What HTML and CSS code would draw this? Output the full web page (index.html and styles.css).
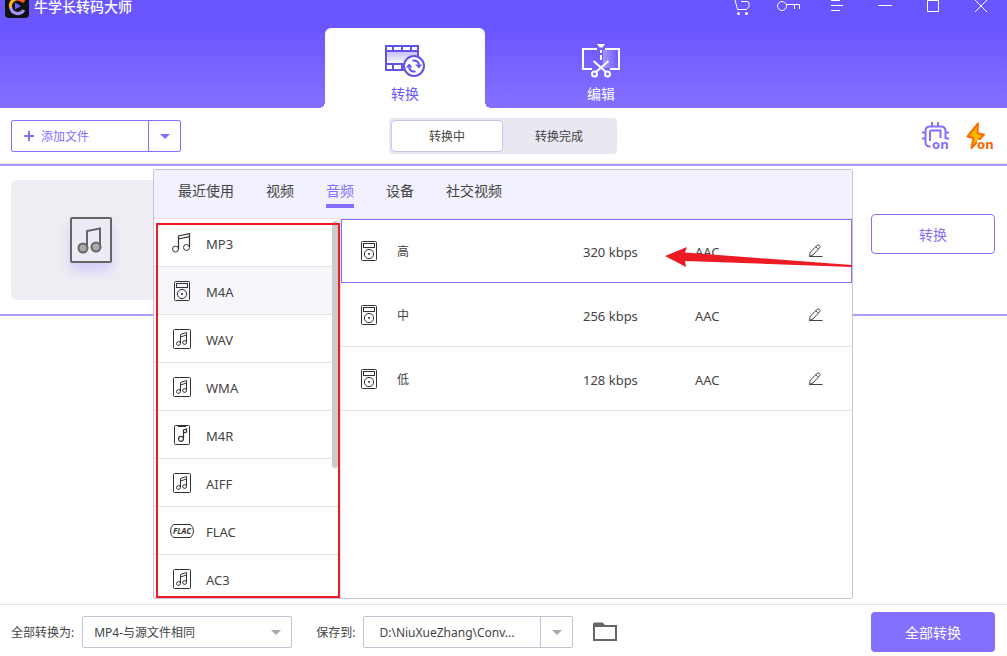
FILE: index.html
```html
<!DOCTYPE html>
<html lang="zh-CN">
<head>
<meta charset="utf-8">
<meta name="viewport" content="width=device-width, initial-scale=1">
<title>牛学长转码大师</title>
<link rel="stylesheet" href="styles.css">
</head>
<body>
<svg class="sprite" aria-hidden="true">
  <symbol id="i-player" viewBox="0 0 16 20"><g fill="none" stroke="#333"><rect x=".5" y=".5" width="15" height="19" rx="1"/><rect x="2.5" y="2.5" width="11" height="4"/><circle cx="8" cy="13" r="4.6"/></g><circle cx="8" cy="13" r="1" fill="#333"/></symbol>
  <symbol id="i-notebox" viewBox="0 0 18 20"><g fill="none" stroke="#333"><rect x=".5" y=".5" width="17" height="19" rx="1"/><path d="M7.500 14.500v-9L13.500 3.500v9.500M7.500 8l6-2" /><circle cx="5.500" cy="14.500" r="1.900"/><circle cx="11.600" cy="13.500" r="1.900"/></g></symbol>
  <symbol id="i-ring" viewBox="0 0 16 20"><g fill="none" stroke="#333"><rect x=".5" y=".5" width="15" height="19" rx="1"/><path d="M4 1.200h8" stroke-width="1.600"/><path d="M9.500 13.500V5l3-1v3l-3 1" stroke-width="1.200"/><circle cx="7" cy="13.800" r="2.500" stroke-width="1.200"/></g></symbol>
  <symbol id="i-pen" viewBox="0 0 14 14"><path d="M.5 12.500h13M.5 12.500l.7-4L8 1.300q1.300-1 2.500.1t.1 2.400L4 11l-3.500 1.500M6.800 2.700l2.600 2.400" fill="none" stroke="#444"/></symbol>
</svg>

<header class="header">
  <div class="titlebar">
    <svg class="logo" width="24" height="18" viewBox="0 6 24 18"><rect width="24" height="24" rx="4" fill="#111"/><g fill="none" stroke-width="3.200"><path d="M17.500 7A7 7 0 0 0 5.800 14" stroke="#ffb11b"/><path d="M12 5.200A7 7 0 0 1 19 8" stroke="#ff5a1f"/><path d="M5.800 13.500A7 7 0 0 0 18.800 16" stroke="#a594ff"/></g><path d="M10 8.500l6 3.500-6 3.500z" fill="#6f63ff"/></svg>
    <h1 class="app-name">牛学长转码大师</h1>
    <div class="window-tools">
      <button aria-label="购物车"><svg width="24" height="18" viewBox="0 0 24 18"><path d="M6 0l2.500 9.500h9L20 6.500V3.500q0-2-2-2h-6" fill="none" stroke="#fff"/><circle cx="9.500" cy="13.500" r="1.500" fill="#fff"/><circle cx="17.500" cy="13.500" r="1.500" fill="#fff"/></svg></button>
      <button aria-label="注册"><svg width="24" height="18" viewBox="0 0 24 18"><g fill="none" stroke="#fff"><circle cx="5" cy="6" r="4.500"/><path d="M9.500 4.500h13V9M17.500 4.500V9"/></g></svg></button>
      <button aria-label="菜单"><svg width="24" height="18" viewBox="0 0 24 18"><path d="M6 .5h9M6 5.500h12M6 10.500h9" stroke="#fff"/></svg></button>
      <button aria-label="最小化"><svg width="24" height="18" viewBox="0 0 24 18"><path d="M5 5.500h14" stroke="#fff"/></svg></button>
      <button aria-label="最大化"><svg width="24" height="18" viewBox="0 0 24 18"><path d="M6.500 0.500h11v11h-11z" fill="none" stroke="#fff"/></svg></button>
      <button aria-label="关闭"><svg width="24" height="18" viewBox="0 0 24 18"><path d="M6 0l12 12M18 0L6 12" stroke="#fff"/></svg></button>
    </div>
  </div>
  <nav class="modes">
    <button class="mode mode-active" aria-current="page">
      <svg width="40" height="34" viewBox="0 0 40 34"><defs><linearGradient id="film" x1="0" y1="0" x2="0" y2="1"><stop offset="0" stop-color="#6a56ff" stop-opacity=".4"/><stop offset="1" stop-color="#6a56ff" stop-opacity="0"/></linearGradient></defs><path d="M1 7h32v14H1z" fill="url(#film)"/><path d="M1 2h32v24H1zM1 7h32M1 20h32M8 2v5M17 2v5M26 2v5M8 20v6M17 20v6" fill="none" stroke="#6253e8" stroke-width="2"/><circle cx="29" cy="22" r="10" fill="#fff" stroke="#6253e8" stroke-width="2"/><path d="M24 23.500a5 5 0 0 0 6.500 3.800M34 20.500a5 5 0 0 0-6.500-3.800" fill="none" stroke="#6253e8" stroke-width="2"/><path d="M20.800 23.500l3.400-4 3.400 4zM30.400 20.500h6.800l-3.400 4z" fill="#6253e8"/></svg>
      <span>转换</span>
    </button>
    <button class="mode">
      <svg width="40" height="34" viewBox="0 0 40 34"><defs><linearGradient id="pane"><stop offset="0" stop-color="#fff" stop-opacity=".35"/><stop offset="1" stop-color="#fff" stop-opacity="0"/></linearGradient></defs><path d="M22 6h14v18H22z" fill="url(#pane)"/><g fill="none" stroke="#fff" stroke-width="2"><path d="M16 5H2v20h9M24 5h14v20h-9M20 6v3M20 11v5M12.500 17L25 28M27.500 17L15 28"/><circle cx="13.500" cy="30" r="2.500"/><circle cx="26.500" cy="30" r="2.500"/></g><path d="M16 0h8l-2.500 3.500h-3z" fill="#fff"/></svg>
      <span>编辑</span>
    </button>
  </nav>
</header>

<section class="toolbar">
  <div class="add-file">
    <button class="add-main"><svg width="10" height="10" viewBox="0 0 10 10"><path d="M5 0v10M0 5h10" stroke="#8470ff" stroke-width="2"/></svg><span class="label">添加文件</span></button>
    <button class="add-more" aria-label="更多添加方式"><i class="caret"></i></button>
  </div>
  <div class="segments">
    <button class="segment segment-active">转换中</button>
    <button class="segment">转换完成</button>
  </div>
  <div class="toggles">
    <button aria-label="硬件加速"><svg width="28" height="28" viewBox="0 0 28 28"><path d="M9.500 24.500H9q-4.500 0-4.500-4.500V9Q4.500 4.500 9 4.500h11q4.500 0 4.500 4.500v8M11 4V0M17 4V0M4 10.500H1M4 16.500H1M25 10.500h3M25 16.500h3" fill="none" stroke="#8470ff" stroke-width="2"/><path d="M9 19V10q0-1.500 1.500-1.500h9V16" fill="none" stroke="#8470ff" stroke-width="2"/><path d="M11 18h17v9H11z" fill="#fff"/><text x="11" y="27" class="on on-chip">on</text></svg></button>
    <button aria-label="高速转换"><svg width="30" height="28" viewBox="0 0 30 28"><path d="M13 1.500L2.500 14.500l6 1.500-2 10 12.500-13.500-6.500-1z" fill="#ffb800" stroke="#ff6a00" stroke-width="2" stroke-linejoin="round"/><path d="M12 18h17v9H12z" fill="#fff"/><text x="12" y="27" class="on on-bolt">on</text></svg></button>
  </div>
</section>

<main class="workspace">
  <article class="task">
    <div class="thumb"><svg width="42" height="46" viewBox="0 0 42 46"><rect x="1" y="1" width="40" height="44" rx="1" fill="#eeebf7" stroke="#666" stroke-width="2"/><g stroke="#666" stroke-width="2"><path d="M17 31V14l13-2.500V30" fill="none"/><circle cx="13" cy="31" r="4.500" fill="#aaa"/><circle cx="26" cy="30" r="4.500" fill="#aaa"/></g></svg></div>
    <button class="convert">转换</button>
  </article>

  <section class="picker">
    <nav class="picker-tabs">
      <button>最近使用</button><button>视频</button><button class="picker-tab-active">音频</button><button>设备</button><button>社交视频</button>
    </nav>
    <div class="picker-body">
      <div class="formats">
        <button class="format"><svg width="20" height="20" viewBox="0 0 20 20"><g fill="none" stroke="#333"><path d="M6.500 16V3L17.500.7V14M6.500 6l11-2.300" stroke-width="1.200"/><circle cx="3.500" cy="16" r="3"/><circle cx="14.500" cy="14.500" r="3"/></g></svg><span class="label">MP3</span></button>
        <button class="format format-active"><svg width="20" height="20"><use href="#i-player"/></svg><span class="label">M4A</span></button>
        <button class="format"><svg width="20" height="20"><use href="#i-notebox"/></svg><span class="label">WAV</span></button>
        <button class="format"><svg width="20" height="20"><use href="#i-notebox"/></svg><span class="label">WMA</span></button>
        <button class="format"><svg width="20" height="20"><use href="#i-ring"/></svg><span class="label">M4R</span></button>
        <button class="format"><svg width="20" height="20"><use href="#i-notebox"/></svg><span class="label">AIFF</span></button>
        <button class="format format-wide"><svg width="24" height="14" viewBox="0 0 24 14"><path d="M3.500.5h17q3 2.500 3 6.500t-3 6.500h-17q-3-2.500-3-6.500t3-6.500z" fill="none" stroke="#333"/><text x="12" y="10" class="flac">FLAC</text></svg><span class="label">FLAC</span></button>
        <button class="format"><svg width="20" height="20"><use href="#i-notebox"/></svg><span class="label">AC3</span></button>
        <i class="scroll-thumb"></i>
      </div>
      <div class="presets-pane">
        <table class="presets">
          <colgroup><col class="c-icon"><col><col class="c-rate"><col class="c-codec"><col class="c-edit"></colgroup>
          <tbody>
          <tr class="preset-active"><td><svg width="16" height="20"><use href="#i-player"/></svg></td><td class="quality"><span class="label">高</span></td><td><span class="label">320 kbps</span></td><td><span class="label">AAC</span></td><td><button aria-label="编辑"><svg width="14" height="14"><use href="#i-pen"/></svg></button></td></tr>
          <tr><td><svg width="16" height="20"><use href="#i-player"/></svg></td><td class="quality"><span class="label">中</span></td><td><span class="label">256 kbps</span></td><td><span class="label">AAC</span></td><td><button aria-label="编辑"><svg width="14" height="14"><use href="#i-pen"/></svg></button></td></tr>
          <tr><td><svg width="16" height="20"><use href="#i-player"/></svg></td><td class="quality"><span class="label">低</span></td><td><span class="label">128 kbps</span></td><td><span class="label">AAC</span></td><td><button aria-label="编辑"><svg width="14" height="14"><use href="#i-pen"/></svg></button></td></tr>
          </tbody>
        </table>
      </div>
    </div>
    <div class="mark-frame"></div>
    <svg class="mark-arrow" width="187" height="22" viewBox="0 0 187 22"><path d="M0 10L22 1l-2 5.500 167 12.500v2L20 15l1 6z" fill="#ed1c24"/></svg>
  </section>
</main>

<footer class="footer">
  <label for="target" class="label">全部转换为:</label>
  <div class="select-wrap"><select id="target"><option>MP4-与源文件相同</option></select><i class="caret"></i></div>
  <label for="path" class="label path-label">保存到:</label>
  <div class="path"><input id="path" value="D:\NiuXueZhang\Conv..." readonly><button aria-label="选择目录"><i class="caret"></i></button></div>
  <button class="folder" aria-label="打开文件夹"><svg width="24" height="20" viewBox="0 0 24 20"><path d="M1 4h22v14H1z" fill="none" stroke="#666" stroke-width="2"/><path d="M0 5V2q0-1.500 1.500-1.500h8L12 3v2z" fill="#666"/></svg></button>
  <button class="convert-all">全部转换</button>
</footer>
</body>
</html>
```
FILE: styles.css
```css
* { box-sizing: border-box; }

body {
  margin: 0;
  min-height: 100vh;
  display: flex;
  flex-direction: column;
  background: #fff;
  color: #444;
  font: 12px/20px "Noto Sans", "Noto Sans CJK SC", sans-serif;
}

button, input, select {
  font: inherit;
  color: inherit;
  background: none;
  border: 0;
  padding: 0;
  margin: 0;
}

button {
  display: flex;
  align-items: center;
  justify-content: center;
}

svg { display: block; flex: none; }
.sprite { position: absolute; width: 0; height: 0; }

.label {
  display: block;
  padding-top: 2px;
}

.caret {
  border: 5px solid transparent;
  border-top-color: currentColor;
  border-bottom: 0;
}

/* Header */
.header {
  background: linear-gradient(#6a56ff 25%, #8470ff);
  color: #fff;
}
.titlebar {
  height: 28px;
  display: flex;
  align-items: flex-start;
  padding: 0 2px 0 5px;
}
.app-name {
  margin: 0 auto 0 5px;
  font-size: 14px;
  line-height: 14px;
  font-weight: 500;
}
.window-tools { display: flex; }
.window-tools button { width: 48px; }

.modes {
  display: flex;
  justify-content: center;
  gap: 36px;
  padding-right: 1px;
}
.mode {
  width: 160px;
  height: 80px;
  flex-direction: column;
  justify-content: flex-start;
  gap: 6px;
  padding-top: 16px;
  font-size: 14px;
}
.mode-active {
  position: relative;
  background: #fff;
  color: #6a56ff;
  border-radius: 6px 6px 0 0;
}
.mode-active::before,
.mode-active::after {
  content: "";
  position: absolute;
  bottom: 0;
  width: 6px;
  height: 6px;
}
.mode-active::before {
  right: 100%;
  background: radial-gradient(circle at 0 0, transparent 6px, #fff 6px);
}
.mode-active::after {
  left: 100%;
  background: radial-gradient(circle at 100% 0, transparent 6px, #fff 6px);
}

/* Toolbar */
.toolbar {
  display: grid;
  grid-template-columns: 1fr auto 1fr;
  align-items: center;
  padding: 10px 12px 9px 11px;
  border-bottom: 1px solid #e4e4e4;
}
.add-file {
  display: flex;
  justify-self: start;
  width: 170px;
  height: 32px;
  border: 1px solid #8470ff;
  border-radius: 2px;
  color: #8470ff;
}
.add-main {
  flex: 1;
  justify-content: flex-start;
  gap: 7px;
  padding-left: 12px;
}
.add-more {
  width: 32px;
  border-left: 1px solid #8470ff;
}
.segments {
  display: flex;
  padding: 2px;
  border-radius: 4px;
  background: #e9e7f2;
}
.segment {
  width: 112px;
  height: 32px;
  padding-top: 1px;
  border-radius: 4px;
}
.segment-active {
  background: #fff;
  border: 1px solid #cbc4ef;
}
.toggles {
  display: flex;
  justify-self: end;
  gap: 16px;
}
.toggles svg { overflow: visible; }
.on { font: 700 13px "Noto Sans", sans-serif; }
.on-chip { fill: #8470ff; }
.on-bolt { fill: #ff6000; }

/* Workspace */
.workspace {
  position: relative;
  flex: 1;
  min-height: 438px;
}
.task {
  display: flex;
  align-items: flex-start;
  justify-content: space-between;
  padding: 14px 12px 14px 11px;
  border: solid #a99cff;
  border-width: 2px 0;
}
.thumb {
  display: flex;
  align-items: center;
  justify-content: center;
  width: 160px;
  height: 120px;
  border-radius: 6px;
  background: #efedf3;
}
.thumb svg { filter: drop-shadow(0 8px 6px #d5ccf8); }
.convert {
  width: 124px;
  height: 40px;
  margin-top: 34px;
  padding-top: 2px;
  border: 1px solid #8470ff;
  border-radius: 4px;
  color: #8470ff;
  font-size: 14px;
}

/* Format picker */
.picker {
  position: absolute;
  inset: 5px 154px 5px 153px;
  display: flex;
  flex-direction: column;
  border: 1px solid #c6c3d2;
  border-radius: 2px;
  background: #fff;
}
.picker-tabs {
  display: flex;
  gap: 32px;
  height: 49px;
  padding-left: 24px;
  border-bottom: 1px solid #e4e4e4;
  background: #f3f0ff;
  font-size: 14px;
}
.picker-tabs button {
  height: 38px;
  padding-top: 8px;
  border-bottom: 4px solid transparent;
}
.picker-tabs .picker-tab-active {
  color: #8470ff;
  border-color: #8470ff;
}
.picker-body {
  flex: 1;
  display: flex;
  min-height: 0;
}
.formats {
  position: relative;
  width: 187px;
  overflow: hidden;
  border-right: 1px solid #e4e4e4;
}
.format {
  width: 100%;
  height: 48px;
  justify-content: flex-start;
  gap: 14px;
  padding-left: 18px;
  border-bottom: 1px solid #e4e4e4;
  font-size: 13px;
}
.format-wide { gap: 12px; padding-left: 16px; }
.format-active { background: #f7f6fb; }
.flac {
  font: italic 700 8px "Noto Sans", sans-serif;
  text-anchor: middle;
  fill: #333;
}
.scroll-thumb {
  position: absolute;
  top: 2px;
  right: 2px;
  width: 6px;
  height: 247px;
  border-radius: 3px;
  background: #ccc;
}
.presets-pane { flex: 1; }
.presets {
  width: 100%;
  table-layout: fixed;
  border-spacing: 0;
  font-size: 13px;
}
.c-icon { width: 56px; }
.c-rate { width: 112px; }
.c-codec { width: 114px; }
.c-edit { width: 43px; }
.presets td {
  height: 64px;
  padding: 0;
  border-bottom: 1px solid #e4e4e4;
}
.presets .quality { font-size: 12px; }
.presets td:first-child { padding-left: 20px; }
.presets .preset-active td {
  border-top: 1px solid #8470ff;
  border-bottom-color: #8470ff;
}
.presets .preset-active td:first-child {
  border-left: 1px solid #8470ff;
  padding-left: 19px;
}
.presets .preset-active td:last-child { border-right: 1px solid #8470ff; }

/* Annotations */
.mark-frame {
  position: absolute;
  top: 53px;
  left: 2px;
  bottom: 0;
  width: 184px;
  border: 2px solid #ed1c24;
}
.mark-arrow {
  position: absolute;
  top: 76px;
  right: 0;
}

/* Footer */
.footer {
  display: flex;
  align-items: center;
  padding: 7px 12px 4px 11px;
  border-top: 1px solid #e4e4e4;
}
.select-wrap {
  position: relative;
  margin-left: 8px;
}
.select-wrap select {
  appearance: none;
  width: 210px;
  height: 32px;
  padding: 2px 0 0 11px;
  border: 1px solid #c6c3d2;
  border-radius: 2px;
}
.select-wrap .caret {
  position: absolute;
  right: 11px;
  top: 14px;
}
.footer .caret { color: #aaa; }
.path-label { margin-left: 24px; }
.path {
  display: flex;
  width: 210px;
  height: 32px;
  margin-left: 8px;
  border: 1px solid #c6c3d2;
  border-radius: 2px;
}
.path input {
  flex: 1;
  min-width: 0;
  padding: 2px 0 0 15px;
}
.path button {
  width: 32px;
  border-left: 1px solid #c6c3d2;
}
.folder { margin: 0 auto 0 20px; }
.convert-all {
  width: 124px;
  height: 40px;
  padding-top: 1px;
  border-radius: 4px;
  background: #8470ff;
  color: #fff;
  font-size: 14px;
}
```
